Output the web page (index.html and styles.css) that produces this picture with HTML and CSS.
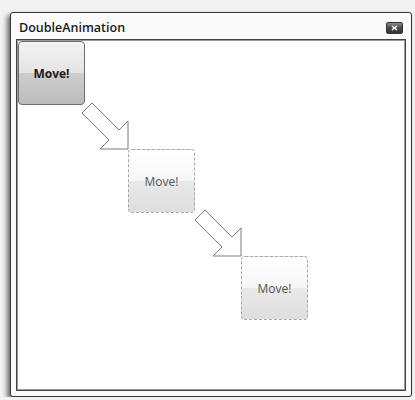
FILE: index.html
```html
<!DOCTYPE html>
<html lang="en">
<head>
  <meta charset="UTF-8" />
  <title>DoubleAnimation</title>
  <link rel="stylesheet" href="styles.css">
</head>
<body>
  <div class="window">
    <div class="titlebar">
      <span class="title">DoubleAnimation</span>
      <button class="close-btn" type="button" aria-label="Close">
        <svg width="7" height="6" viewBox="0 0 7 6"><path d="M1 1 L6 5 M6 1 L1 5" stroke="#fff" stroke-width="1.4"/></svg>
      </button>
    </div>

    <div class="client">
      <!-- path of the animated button -->
      <svg class="arrows" width="390" height="350" viewBox="0 0 390 350">
        <polygon points="65,73 75,63 102,90 111,81 111,109 83,109 92,100" />
        <polygon points="178,180 188,170 215,197 224,188 224,216 196,216 205,207" />
      </svg>

      <button class="move-btn start" type="button">Move!</button>
      <div class="move-btn ghost step1">Move!</div>
      <div class="move-btn ghost step2">Move!</div>
    </div>
  </div>
</body>
</html>
```

FILE: styles.css
```css
body {
  margin: 0;
  background: #f2f2f2;
  font-family: "Open Sans", "Noto Sans", sans-serif;
}
.window {
  display: flex;
  flex-direction: column;
  box-sizing: border-box;
  width: 402px;
  height: 385px;
  margin: 12px 0 0 10px;
  padding: 0 5px 5px 5px;
  background: #fafafa;
  border: 1px solid #333;
  border-radius: 3px;
  box-shadow: -3px 3px 5px rgba(0, 0, 0, 0.55);
}
.titlebar {
  display: flex;
  align-items: center;
  justify-content: space-between;
  height: 26px;
  flex-shrink: 0;
}
.title {
  font-size: 12.5px;
  font-weight: 600;
  color: #1a1a1a;
  padding-left: 3px;
  padding-top: 3px;
}
.close-btn {
  display: flex;
  align-items: center;
  justify-content: center;
  width: 17px;
  height: 12px;
  margin: 4px 3px 0 0;
  padding: 0;
  border: 1px solid #333;
  border-radius: 2px;
  background: linear-gradient(#8a8a8a, #4a4a4a 50%, #333);
}
.client {
  position: relative;
  flex: 1;
  background: #fff;
  border: 1px solid #444;
  box-shadow: inset 0 0 0 1px #999;
}
.arrows {
  position: absolute;
  left: 0;
  top: 0;
}
.arrows polygon {
  fill: #fff;
  stroke: #7a7a7a;
  stroke-width: 1;
}
.move-btn {
  position: absolute;
  box-sizing: border-box;
  display: flex;
  align-items: center;
  justify-content: center;
  width: 67px;
  height: 64px;
  padding: 0;
  font-family: "Open Sans", "Noto Sans", sans-serif;
  font-size: 12px;
  border-radius: 4px;
}
.start {
  left: 1px;
  top: 1px;
  font-weight: bold;
  color: #1a1a1a;
  border: 1px solid #6e6e6e;
  background: linear-gradient(#f2f2f2, #e4e4e4 50%, #cdcdcd 50%, #bcbcbc);
}
.ghost {
  color: #555;
  border: 1px dashed #a8a8a8;
  background: linear-gradient(#fff, #f6f6f6 50%, #e9e9e9 50%, #dedede);
}
.step1 {
  left: 111px;
  top: 109px;
}
.step2 {
  left: 224px;
  top: 216px;
}
```
